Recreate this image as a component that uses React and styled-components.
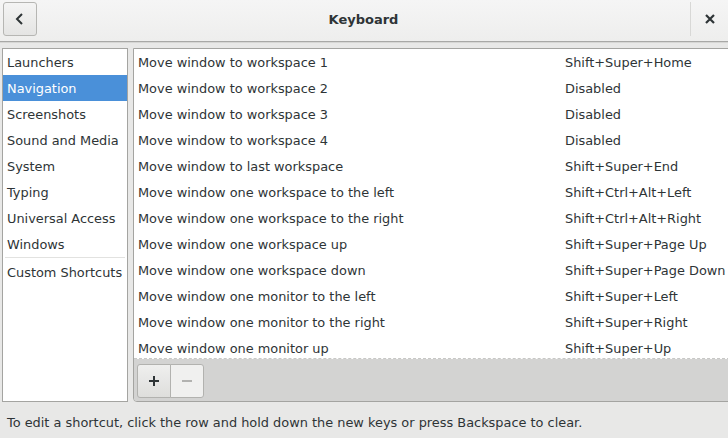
import React from 'react'
import styled, { createGlobalStyle } from 'styled-components'

const categories = [
  'Launchers',
  'Navigation',
  'Screenshots',
  'Sound and Media',
  'System',
  'Typing',
  'Universal Access',
  'Windows',
]

function createRow(action, keys) {
  return { action, keys }
}

const rows = [
  createRow('Move window to workspace 1', 'Shift+Super+Home'),
  createRow('Move window to workspace 2', 'Disabled'),
  createRow('Move window to workspace 3', 'Disabled'),
  createRow('Move window to workspace 4', 'Disabled'),
  createRow('Move window to last workspace', 'Shift+Super+End'),
  createRow('Move window one workspace to the left', 'Shift+Ctrl+Alt+Left'),
  createRow('Move window one workspace to the right', 'Shift+Ctrl+Alt+Right'),
  createRow('Move window one workspace up', 'Shift+Super+Page Up'),
  createRow('Move window one workspace down', 'Shift+Super+Page Down'),
  createRow('Move window one monitor to the left', 'Shift+Super+Left'),
  createRow('Move window one monitor to the right', 'Shift+Super+Right'),
  createRow('Move window one monitor up', 'Shift+Super+Up'),
]

const Global = createGlobalStyle`
  html, body {
    margin: 0;
    padding: 0;
    background: #e8e8e7;
    overflow: hidden;
  }
  body {
    font-family: 'DejaVu Sans', 'Liberation Sans', sans-serif;
    font-size: 12.9px;
    color: #2e3436;
  }
`

const Window = styled.div`
  width: 728px;
  height: 438px;
  display: flex;
  flex-direction: column;
  overflow: hidden;
`

const HeaderBar = styled.header`
  height: 41px;
  flex-shrink: 0;
  display: flex;
  align-items: flex-start;
  background: linear-gradient(#f5f5f5, #eeeeed);
  border-bottom: 1px solid #a8a8a6;
  box-shadow: 0 1px 0 #d6d6d4;
`

const BackButton = styled.button`
  margin: 2px 0 0 3px;
  width: 34px;
  height: 34px;
  border: 1px solid #b6b6b3;
  border-radius: 3px;
  background: linear-gradient(#f4f4f4, #e4e4e3);
  display: flex;
  align-items: center;
  justify-content: center;
  padding: 0;
  color: #2e3436;
`

const Title = styled.h1`
  flex: 1;
  margin: 0;
  font-size: 13px;
  font-weight: bold;
  text-align: center;
  line-height: 39px;
  color: #2e3436;
`

const CloseArea = styled.div`
  width: 37px;
  height: 34px;
  margin-top: 2px;
  border-left: 1px solid #d8d8d6;
  display: flex;
  align-items: center;
  justify-content: center;
  color: #2e3436;
`

const Body = styled.div`
  display: flex;
  gap: 5px;
  padding: 6px 0 0 2px;
  margin-right: -3px;
  height: 354px;
  flex-shrink: 0;
`

const Sidebar = styled.ul`
  width: 124px;
  margin: 0;
  padding: 0;
  list-style: none;
  background: #ffffff;
  border: 1px solid #a4a4a1;
  height: 352px;
`

const SideItem = styled.li`
  height: 26px;
  line-height: 28px;
  padding-left: 4px;
  white-space: nowrap;
  background: ${(p) => (p.$active ? '#4a90d9' : 'transparent')};
  color: ${(p) => (p.$active ? '#ffffff' : '#2e3436')};
`

const SideSeparator = styled.li`
  height: 1px;
  margin: 0 2px 1px;
  background: #e2e2e0;
`

const Panel = styled.div`
  flex: 1;
  display: flex;
  flex-direction: column;
  border: 1px solid #a4a4a1;
  border-radius: 0 0 0 4px;
  overflow: hidden;
  height: 352px;
`

const List = styled.div`
  height: 309px;
  background: #ffffff;
  overflow: hidden;
  border-bottom: 1px dashed #c8c8c6;
`

const Row = styled.div`
  display: grid;
  grid-template-columns: 427px 1fr;
  height: 26px;
  line-height: 28px;
  padding-left: 4px;
  white-space: nowrap;
`

const Toolbar = styled.div`
  flex: 1;
  background: #d3d3d2;
  padding: 5px 0 0 3px;
  display: flex;
`

const ToolButton = styled.button`
  width: 34px;
  height: 34px;
  padding: 0;
  display: flex;
  align-items: center;
  justify-content: center;
  border: 1px solid #b2b2af;
  background: ${(p) =>
    p.disabled ? '#f0f0ef' : 'linear-gradient(#efefee, #dededc)'};
  border-radius: ${(p) => (p.$first ? '3px 0 0 3px' : '0 3px 3px 0')};
  margin-left: ${(p) => (p.$first ? '0' : '-1px')};
  color: ${(p) => (p.disabled ? '#b2b2b0' : '#2e3436')};
`

const Footer = styled.footer`
  padding: 13px 0 0 7px;
  white-space: nowrap;
  color: #2e3436;
`

const Chevron = () => (
  <svg width="16" height="16" viewBox="0 0 16 16">
    <path d="M10 3 L5 8 L10 13" fill="none" stroke="#2e3436" strokeWidth="2" />
  </svg>
)

const CloseIcon = () => (
  <svg width="12" height="12" viewBox="0 0 12 12">
    <path d="M2 2 L10 10 M10 2 L2 10" stroke="#2e3436" strokeWidth="2.2" />
  </svg>
)

const PlusIcon = () => (
  <svg width="14" height="14" viewBox="0 0 14 14">
    <path d="M7 2 V12 M2 7 H12" stroke="currentColor" strokeWidth="2" />
  </svg>
)

const MinusIcon = () => (
  <svg width="14" height="14" viewBox="0 0 14 14">
    <path d="M2 7 H12" stroke="currentColor" strokeWidth="2" />
  </svg>
)

const App = () => {
  return (
    <Window>
      <Global />
      <HeaderBar>
        <BackButton>
          <Chevron />
        </BackButton>
        <Title>Keyboard</Title>
        <CloseArea>
          <CloseIcon />
        </CloseArea>
      </HeaderBar>
      <Body>
        <Sidebar>
          {categories.map((name) => (
            <SideItem key={name} $active={name === 'Navigation'}>
              {name}
            </SideItem>
          ))}
          <SideSeparator />
          <SideItem>Custom Shortcuts</SideItem>
        </Sidebar>
        <Panel>
          <List>
            {rows.map((r) => (
              <Row key={r.action}>
                <span>{r.action}</span>
                <span>{r.keys}</span>
              </Row>
            ))}
          </List>
          <Toolbar>
            <ToolButton $first>
              <PlusIcon />
            </ToolButton>
            <ToolButton disabled>
              <MinusIcon />
            </ToolButton>
          </Toolbar>
        </Panel>
      </Body>
      <Footer>
        To edit a shortcut, click the row and hold down the new keys or press Backspace to clear.
      </Footer>
    </Window>
  )
}

export default App
